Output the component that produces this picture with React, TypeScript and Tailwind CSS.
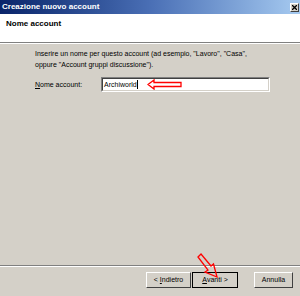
import React from 'react';

const font = { fontFamily: '"Liberation Sans", Arial, sans-serif' };

const Btn: React.FC<{ children: React.ReactNode; primary?: boolean; className?: string }> = ({ children, primary, className }) => (
  <div
    className={`h-[16px] flex items-center justify-center text-[7px] text-black bg-[#d4d0c8] ${
      primary ? 'border border-black' : 'border border-t-white border-l-white border-r-[#404040] border-b-[#404040]'
    } ${className ?? ''}`}
  >
    {children}
  </div>
);

export default function App() {
  return (
    <div className="relative w-[300px] h-[296px] flex flex-col bg-[#d4d0c8] overflow-hidden" style={font}>
      {/* Title bar */}
      <div className="h-[14px] flex items-center justify-between pl-[2px] pr-[1px] bg-gradient-to-r from-[#0a246a] via-[#4a6fb5] to-[#a6caf0]">
        <span className="text-[8px] font-bold text-white leading-none">Creazione nuovo account</span>
        <div className="w-[9px] h-[9px] bg-[#d4d0c8] border border-t-white border-l-white border-r-[#404040] border-b-[#404040] flex items-center justify-center">
          <svg width="5" height="5" viewBox="0 0 5 5">
            <path d="M0 0 L5 5 M5 0 L0 5" stroke="black" strokeWidth="1.3" />
          </svg>
        </div>
      </div>

      {/* Header */}
      <div className="h-[28px] bg-white pl-[6px] pt-[5px]">
        <div className="text-[8px] font-bold text-black leading-[10px]">Nome account</div>
      </div>
      <div className="h-px bg-[#808080]" />
      <div className="h-px bg-white" />

      {/* Body */}
      <div className="flex-1 pl-[35px] pt-[4px] flex flex-col">
        <p className="text-[7px] leading-[11px] text-black">
          Inserire un nome per questo account (ad esempio, "Lavoro", "Casa",
          <br />
          oppure "Account gruppi discussione").
        </p>
        <div className="flex items-center mt-[7px]">
          <span className="w-[66px] text-[7px] leading-[9px] text-black">
            <span className="underline">N</span>ome account:
          </span>
          <div className="relative w-[169px] h-[15px] bg-white border border-t-[#808080] border-l-[#808080] border-r-white border-b-white flex items-center">
            <div className="absolute inset-0 border border-t-[#404040] border-l-[#404040] border-r-[#d4d0c8] border-b-[#d4d0c8]" />
            <span className="pl-[2px] text-[7px] leading-[9px] text-black">Archiworld</span>
            <span className="w-px h-[9px] bg-black" />
            <svg className="absolute left-[45px] top-[1px]" width="36" height="11" viewBox="0 0 36 11">
              <path d="M1 5.5 L7 1 L7 3.5 L34 3.5 L34 7.5 L7 7.5 L7 10 Z" fill="none" stroke="#ff0000" strokeWidth="1.3" />
            </svg>
          </div>
        </div>
      </div>

      {/* Bottom separator */}
      <div className="h-px bg-[#808080]" />
      <div className="h-px bg-white" />

      {/* Buttons */}
      <div className="h-[29px] flex items-start pt-[5px] pr-[7px] justify-end">
        <Btn className="w-[45px]">&lt; <span className="underline ml-[2px]">I</span>ndietro</Btn>
        <Btn primary className="w-[46px] ml-px"><span className="underline">A</span>vanti &gt;</Btn>
        <Btn className="w-[39px] ml-[16px]">Annulla</Btn>
      </div>

      {/* Red pointer arrow */}
      <svg className="absolute left-[196px] top-[253px]" width="24" height="26" viewBox="0 0 24 26">
        <path d="M2 4 L5 1 L15 13 L17.5 11 L21 24 L9 19 L12 17 Z" fill="none" stroke="#ff0000" strokeWidth="1.3" />
      </svg>
    </div>
  );
}
